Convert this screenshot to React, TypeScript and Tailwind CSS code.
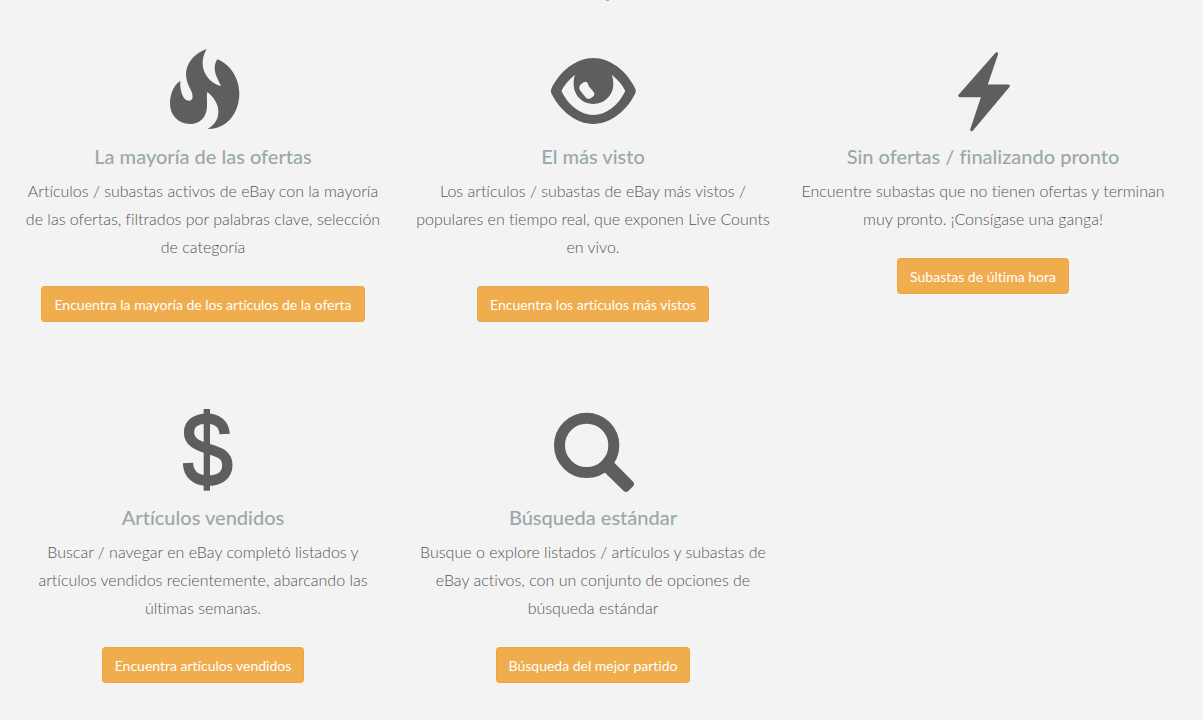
import type { ReactNode } from "react";

type Feature = {
  title: string;
  text: string;
  action: string;
  icon: ReactNode;
};

function Icon({ children, viewBox = "39 33 300 270" }: { children: ReactNode; viewBox?: string }) {
  return (
    <svg viewBox={viewBox} fill="currentColor" aria-hidden="true" className="h-[90px] w-[100px] text-[#5e5e5e]">
      {children}
    </svg>
  );
}

const fire = (
  <Icon>
    <path d="M200 42C165 53 138 85 138 117C138 150 158 165 158 185C158 192 153 197 146 197C129 197 119 168 121 138C100 150 90 180 90 205C90 240 115 267 150 267C180 267 200 245 201 215C202 200 199 185 202 171C222 187 235 207 235 230C235 255 222 270 203 282C255 284 298 240 298 175C298 125 265 85 232 73C226 83 224 90 224 100C224 118 235 135 243 153C215 148 188 120 188 85C188 65 195 52 200 42Z" />
  </Icon>
);

const eye = (
  <Icon>
    <path
      fillRule="evenodd"
      d="M64 161C90 107 140 69 190 69C240 69 290 107 316 161Q319 168 316 175C290 229 240 267 190 267C140 267 90 229 64 175Q61 168 64 161ZM96 164C105 148 118 133 135 119C131 130 131 138 131 148C131 182 158 207 190 207C222 207 250 182 250 148C250 138 249 130 245 119C262 133 276 148 284 164Q287 168 284 172C265 210 230 240 190 240C150 240 115 210 96 172Q94 168 96 164ZM151 149L161 142Q168 138 173 144L176 153L191 171Q196 178 190 184L182 190Q174 194 168 188L151 167Q145 157 151 149Z"
    />
  </Icon>
);

const bolt = (
  <Icon>
    <path stroke="currentColor" strokeWidth="9" strokeLinejoin="round" d="M230 56L119 182L189 182L155 284L265 153L197 153Z" />
  </Icon>
);

const dollar = (
  <Icon viewBox="39 36 300 270">
    <rect x="191" y="42" width="19" height="245" />
    <path
      fill="none"
      stroke="currentColor"
      strokeWidth="31"
      d="M254 117C252 87 232 71 201 71C168 71 147 87 147 112C147 140 170 151 203 161C240 171 262 180 262 211C262 241 238 257 203 257C168 257 145 238 144 204"
    />
  </Icon>
);

const search = (
  <Icon viewBox="39 36 300 270">
    <circle cx="170" cy="151" r="81.5" fill="none" stroke="currentColor" strokeWidth="33" />
    <path d="M250 200L310 261Q315 267 310 273L295 288Q288 294 282 289L222 230Z" />
  </Icon>
);

const features: Feature[] = [
  {
    title: "La mayoría de las ofertas",
    text: "Artículos / subastas activos de eBay con la mayoría de las ofertas, filtrados por palabras clave, selección de categoría",
    action: "Encuentra la mayoría de los artículos de la oferta",
    icon: fire,
  },
  {
    title: "El más visto",
    text: "Los artículos / subastas de eBay más vistos / populares en tiempo real, que exponen Live Counts en vivo.",
    action: "Encuentra los artículos más vistos",
    icon: eye,
  },
  {
    title: "Sin ofertas / finalizando pronto",
    text: "Encuentre subastas que no tienen ofertas y terminan muy pronto. ¡Consígase una ganga!",
    action: "Subastas de última hora",
    icon: bolt,
  },
  {
    title: "Artículos vendidos",
    text: "Buscar / navegar en eBay completó listados y artículos vendidos recientemente, abarcando las últimas semanas.",
    action: "Encuentra artículos vendidos",
    icon: dollar,
  },
  {
    title: "Búsqueda estándar",
    text: "Busque o explore listados / artículos y subastas de eBay activos, con un conjunto de opciones de búsqueda estándar",
    action: "Búsqueda del mejor partido",
    icon: search,
  },
];

function FeatureCard({ title, text, action, icon }: Feature) {
  return (
    <article className="flex flex-col items-center px-[10px] text-center">
      {icon}
      <h3 className="mt-[9px] text-[20px] leading-[22px] font-medium text-[#9aa8a8]">{title}</h3>
      <p className="mt-[10px] text-[16px] leading-[28px] font-light text-[#555555]">{text}</p>
      <button
        type="button"
        className="mt-[25px] h-9 cursor-pointer rounded border border-[#eea236]/60 bg-[#f0ad4e] px-3 pt-px text-[14px] leading-5 text-white"
      >
        {action}
      </button>
    </article>
  );
}

export default function App() {
  return (
    <main className="min-h-screen bg-[#f3f3f3] pr-[17px] font-['Lato',sans-serif] [font-variant-ligatures:no-common-ligatures]">
      <div className="flex h-[46px] justify-center pl-7">
        <span className="h-px w-[3px] bg-[#aaaaaa]" />
      </div>
      <section className="mx-auto grid max-w-[1170px] grid-cols-1 gap-y-[85px] pb-9 sm:grid-cols-2 lg:grid-cols-3">
        {features.map((feature) => (
          <FeatureCard key={feature.title} {...feature} />
        ))}
      </section>
    </main>
  );
}
